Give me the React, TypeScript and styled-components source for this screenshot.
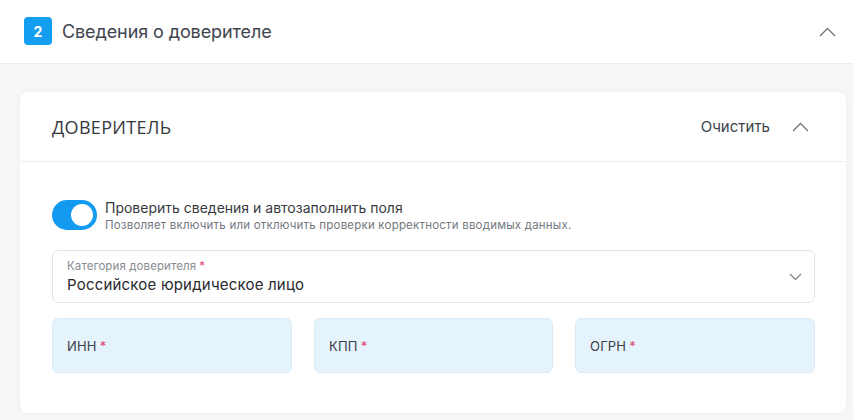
import React from 'react';
import styled, { createGlobalStyle } from 'styled-components';

const GlobalStyle = createGlobalStyle`
  body {
    margin: 0;
    background: #f7f7f8;
    font-family: Inter, "Noto Sans", sans-serif;
    color: #2f333b;
  }
`;

const Page = styled.div`
  width: 853px;
  height: 420px;
  overflow: hidden;
  background: #f7f7f8;
`;

const TopBar = styled.header`
  height: 63px;
  background: #fff;
  border-bottom: 1px solid #ededef;
  display: flex;
  align-items: center;
  padding: 0 14px 0 24px;
`;

const Badge = styled.span`
  width: 28px;
  height: 28px;
  border-radius: 4px;
  background: #139ef2;
  color: #fff;
  font-size: 14px;
  font-weight: 700;
  display: flex;
  align-items: center;
  justify-content: center;
  margin-top: -1px;
`;

const TopTitle = styled.h2`
  margin: 0 0 0 10px;
  font-size: 18px;
  font-weight: 400;
  color: #40444d;
  flex: 1;
  letter-spacing: -0.1px;
`;

const IconButton = styled.span`
  width: 24px;
  height: 24px;
  display: flex;
  align-items: center;
  justify-content: center;
  color: #70747b;
`;

const Card = styled.section`
  margin: 28px 7px 0 20px;
  background: #fff;
  border-radius: 8px;
  box-shadow: 0 0 6px rgba(0, 0, 0, 0.04);
  padding-bottom: 40px;
`;

const CardHeader = styled.div`
  height: 69px;
  display: flex;
  align-items: center;
  padding: 0 34px 0 32px;
  border-bottom: 1px solid #ededef;
`;

const CardTitle = styled.h3`
  margin: 0;
  flex: 1;
  font-family: "Open Sans", "Noto Sans", sans-serif;
  font-size: 18px;
  font-weight: 400;
  color: #35383e;
  letter-spacing: 0.3px;
`;

const ClearButton = styled.span`
  font-size: 15px;
  color: #3c4047;
  margin-right: 18px;
`;

const CardBody = styled.div`
  padding: 37px 31px 0 32px;
  display: flex;
  flex-direction: column;
`;

const ToggleRow = styled.div`
  display: flex;
  align-items: flex-start;
  gap: 8px;
`;

const Toggle = styled.span<{ on: boolean }>`
  width: 45px;
  height: 30px;
  border-radius: 15px;
  background: ${(p) => (p.on ? '#129bf0' : '#c9ccd1')};
  display: flex;
  align-items: center;
  justify-content: ${(p) => (p.on ? 'flex-end' : 'flex-start')};
  padding: 0 4px;
  box-sizing: border-box;
  flex-shrink: 0;
  margin-top: 1px;

  &::after {
    content: '';
    width: 22px;
    height: 22px;
    border-radius: 50%;
    background: #fff;
  }
`;

const ToggleText = styled.div`
  display: flex;
  flex-direction: column;
`;

const ToggleTitle = styled.span`
  font-size: 14px;
  color: #373a40;
  line-height: 18px;
`;

const ToggleHint = styled.span`
  font-size: 11.5px;
  color: #74787f;
  line-height: 15px;
  margin-top: 1px;
  letter-spacing: 0.2px;
`;

const Select = styled.div`
  margin-top: 17px;
  height: 53px;
  border: 1px solid #e3e4e7;
  border-radius: 6px;
  box-sizing: border-box;
  display: flex;
  align-items: center;
  padding: 0 12px 0 14px;
`;

const SelectText = styled.div`
  flex: 1;
  display: flex;
  flex-direction: column;
`;

const SmallLabel = styled.span`
  font-size: 11.5px;
  color: #888b91;
  line-height: 14px;
  letter-spacing: 0.1px;
`;

const SelectValue = styled.span`
  font-size: 15px;
  color: #27292e;
  line-height: 20px;
  margin-top: 2px;
  letter-spacing: 0.2px;
`;

const Required = styled.span`
  color: #e0456f;
  margin-left: 3px;
`;

const Fields = styled.div`
  margin-top: 15px;
  display: grid;
  grid-template-columns: 240px 239px 240px;
  justify-content: space-between;
`;

const Field = styled.div`
  height: 55px;
  border-radius: 6px;
  background: #e5f3fd;
  border: 1px solid #dceaf5;
  box-sizing: border-box;
  display: flex;
  align-items: center;
  padding: 0 14px;
  font-size: 13px;
  color: #3c4047;
  letter-spacing: 0.2px;
`;

const Chevron = ({ up }: { up?: boolean }) => (
  <svg width="17" height="10" viewBox="0 0 17 10" fill="none">
    <path
      d={up ? 'M1 9 L8.5 1.5 L16 9' : 'M1 1 L8.5 8.5 L16 1'}
      stroke="currentColor"
      strokeWidth="1.3"
    />
  </svg>
);

const SmallChevron = () => (
  <svg width="13" height="8" viewBox="0 0 13 8" fill="none">
    <path d="M1 1 L6.5 6.5 L12 1" stroke="#7a7e85" strokeWidth="1.2" />
  </svg>
);

const fields = ['ИНН', 'КПП', 'ОГРН'];

const App: React.FC = () => {
  return (
    <Page>
      <GlobalStyle />
      <TopBar>
        <Badge>2</Badge>
        <TopTitle>Сведения о доверителе</TopTitle>
        <IconButton>
          <Chevron up />
        </IconButton>
      </TopBar>
      <Card>
        <CardHeader>
          <CardTitle>ДОВЕРИТЕЛЬ</CardTitle>
          <ClearButton>Очистить</ClearButton>
          <IconButton>
            <Chevron up />
          </IconButton>
        </CardHeader>
        <CardBody>
          <ToggleRow>
            <Toggle on />
            <ToggleText>
              <ToggleTitle>Проверить сведения и автозаполнить поля</ToggleTitle>
              <ToggleHint>Позволяет включить или отключить проверки корректности вводимых данных.</ToggleHint>
            </ToggleText>
          </ToggleRow>
          <Select>
            <SelectText>
              <SmallLabel>
                Категория доверителя<Required>*</Required>
              </SmallLabel>
              <SelectValue>Российское юридическое лицо</SelectValue>
            </SelectText>
            <SmallChevron />
          </Select>
          <Fields>
            {fields.map((f) => (
              <Field key={f}>
                {f}
                <Required>*</Required>
              </Field>
            ))}
          </Fields>
        </CardBody>
      </Card>
    </Page>
  );
};

export default App;
